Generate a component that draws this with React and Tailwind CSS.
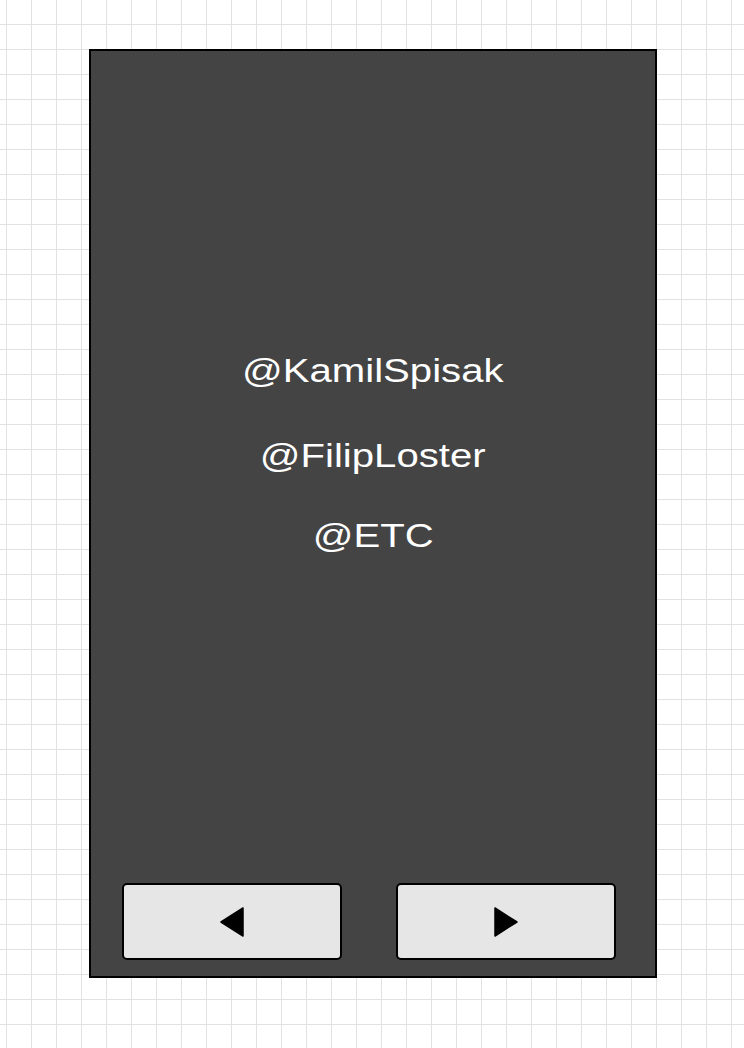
import { useState } from 'react';

const handles = [
  { name: '@KamilSpisak', gap: 'mt-[302px]' },
  { name: '@FilipLoster', gap: 'mt-[51px]' },
  { name: '@ETC', gap: 'mt-[46px]' },
];

function Arrow({ dir }) {
  const pts = dir === 'left' ? '23,1 23,29 1,15' : '1,1 1,29 23,15';
  return (
    <svg width="24" height="30" viewBox="0 0 24 30">
      <polygon points={pts} fill="#000" stroke="#000" strokeWidth="1.5" strokeLinejoin="round" />
    </svg>
  );
}

export default function App() {
  const [page, setPage] = useState(0);

  return (
    <div className="w-full h-[1048px] bg-white bg-[linear-gradient(to_right,#e2e2e2_1px,transparent_1px),linear-gradient(to_bottom,#e2e2e2_1px,transparent_1px)] bg-[size:25px_25px] bg-[position:6px_24px] pt-[49px] pl-[89px] font-['Liberation_Sans',Arial,sans-serif]">
      <div className="w-[568px] h-[929px] border-2 border-black bg-[#444444] flex flex-col">
        {/* credits */}
        <div className="flex flex-col items-center text-white">
          {handles.map((h) => (
            <p key={h.name} className={`${h.gap} text-[34px] leading-[34px] scale-x-[1.18]`}>
              {h.name}
            </p>
          ))}
        </div>

        {/* nav */}
        <div className="mt-auto flex gap-[54px] pl-[31px] pb-[16px]">
          <button
            onClick={() => setPage(page - 1)}
            className="w-[220px] h-[77px] border-2 border-black rounded-[5px] bg-[#e6e6e6] flex items-center justify-center"
          >
            <Arrow dir="left" />
          </button>
          <button
            onClick={() => setPage(page + 1)}
            className="w-[220px] h-[77px] border-2 border-black rounded-[5px] bg-[#e6e6e6] flex items-center justify-center"
          >
            <Arrow dir="right" />
          </button>
        </div>
      </div>
    </div>
  );
}
